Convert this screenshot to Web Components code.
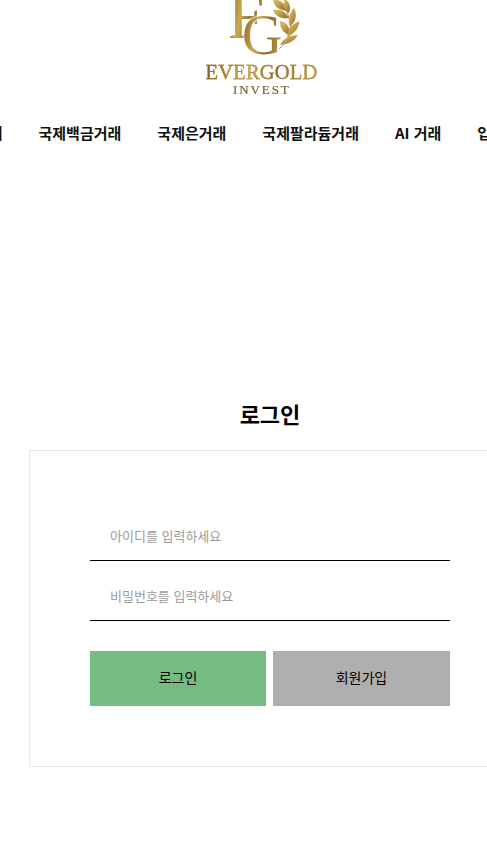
<!DOCTYPE html>
<html lang="ko">
<head>
<meta charset="utf-8">
<title>로그인</title>
<style>
html, body { margin: 0; background: #fff; overflow: hidden; height: 855px; }
body { font-family: "Noto Sans CJK KR", "Noto Sans", sans-serif; color: #000; }
</style>
</head>
<body>
<login-page>
  <site-logo slot="logo"></site-logo>
  <site-nav slot="nav">
    <a>국제금거래</a>
    <a>국제백금거래</a>
    <a>국제은거래</a>
    <a>국제팔라듐거래</a>
    <a>AI 거래</a>
    <a>입출금</a>
  </site-nav>
  <login-panel slot="panel">
    <text-field>아이디를 입력하세요</text-field>
    <text-field>비밀번호를 입력하세요</text-field>
    <action-button slot="actions" color="#76bb82">로그인</action-button>
    <action-button slot="actions" color="#afafaf">회원가입</action-button>
  </login-panel>
</login-page>
<script>
const logoTemplate = document.createElement('template')
logoTemplate.innerHTML = /* HTML */`
<style>
:host {
  display: block;
  position: relative;
  width: 140px;
  height: 100px;
  overflow: hidden;
  font-family: "Liberation Serif", serif;
}
span {
  position: absolute;
  white-space: nowrap;
  line-height: 1;
  color: transparent;
  -webkit-background-clip: text;
  background-clip: text;
  background-image: linear-gradient(100deg, #7a5c1c 0%, #cdaa52 38%, #8a6a26 62%, #c9a64e 100%);
  filter: blur(.3px);
}
.f { left: 38px; top: -16px; font-size: 65px; -webkit-text-stroke: .2px #8f6f2a; }
.g { left: 52px; top: 7px; font-size: 56px; filter: blur(.3px) drop-shadow(0 0 1px #fff) drop-shadow(0 0 1px #fff); }
.word { left: 15.5px; top: 62px; font-size: 20.5px; letter-spacing: .2px; -webkit-text-stroke: .3px #a5853a; }
.sub {
  left: 43px;
  top: 83px;
  font-size: 13px;
  letter-spacing: 1.9px;
  color: #7a6530;
  background: none;
  -webkit-text-stroke: .2px #7a6530;
}
svg { position: absolute; left: 0; top: 0; }
</style>
<span class="f">F</span>
<span class="g">G</span>
<svg width="140" height="100" viewBox="0 0 420 300">
  <defs>
    <linearGradient id="leaf" x1="0" y1="0" x2="1" y2="1">
      <stop offset="0" stop-color="#e0c67c"/>
      <stop offset=".5" stop-color="#bd9a46"/>
      <stop offset="1" stop-color="#8a6a28"/>
    </linearGradient>
  </defs>
  <path d="M268 146C294 122 308 92 298 58 294 40 284 22 272 8" fill="none" stroke="#a98a3c" stroke-width="3"/>
  <g fill="url(#leaf)">
    <path d="M249 -2C270 -2 286 10 288 32 266 30 250 18 249 -2Z"/>
    <path d="M284 -4C300 6 304 24 296 40 282 28 278 12 284 -4Z"/>
    <path d="M248 30C268 24 288 34 296 54 272 58 256 48 248 30Z"/>
    <path d="M312 24C322 44 318 66 300 80 292 60 298 40 312 24Z"/>
    <path d="M270 62C290 66 302 84 300 106 280 100 268 84 270 62Z"/>
    <path d="M328 64C326 86 312 102 292 110 292 90 306 72 328 64Z"/>
    <path d="M324 106C312 124 294 134 270 134 282 114 302 104 324 106Z"/>
  </g>
</svg>
<span class="word">EVERGOLD</span>
<span class="sub">INVEST</span>
`
class SiteLogo extends HTMLElement {
  constructor() {
    super()
    this.attachShadow({mode: 'open'}).appendChild(logoTemplate.content.cloneNode(true))
  }
}
customElements.define('site-logo', SiteLogo)

const navTemplate = document.createElement('template')
navTemplate.innerHTML = /* HTML */`
<style>
:host {
  display: flex;
  gap: 36px;
  margin-left: -66.5px;
  height: 64px;
  align-items: center;
  white-space: nowrap;
  font-size: 15px;
  font-weight: 700;
  color: #111;
}
</style>
<slot></slot>
`
class SiteNav extends HTMLElement {
  constructor() {
    super()
    this.attachShadow({mode: 'open'}).appendChild(navTemplate.content.cloneNode(true))
  }
}
customElements.define('site-nav', SiteNav)

const fieldTemplate = document.createElement('template')
fieldTemplate.innerHTML = /* HTML */`
<style>
:host {
  display: flex;
  align-items: center;
  box-sizing: border-box;
  height: 60px;
  padding: 10px 20px 0;
  border-bottom: 1px solid #000;
  font-size: 13px;
  color: #9c9c9c;
}
</style>
<slot></slot>
`
class TextField extends HTMLElement {
  constructor() {
    super()
    this.attachShadow({mode: 'open'}).appendChild(fieldTemplate.content.cloneNode(true))
  }
}
customElements.define('text-field', TextField)

const buttonTemplate = document.createElement('template')
buttonTemplate.innerHTML = /* HTML */`
<style>
:host {
  display: flex;
  align-items: center;
  justify-content: center;
  box-sizing: border-box;
  height: 55px;
  padding-bottom: 4px;
  font-size: 14px;
  cursor: pointer;
  background: var(--button-color);
}
</style>
<slot></slot>
`
class ActionButton extends HTMLElement {
  constructor() {
    super()
    this.attachShadow({mode: 'open'}).appendChild(buttonTemplate.content.cloneNode(true))
    this.style.setProperty('--button-color', this.getAttribute('color'))
  }
}
customElements.define('action-button', ActionButton)

const panelTemplate = document.createElement('template')
panelTemplate.innerHTML = /* HTML */`
<style>
:host {
  display: block;
  box-sizing: border-box;
  width: 482px;
  margin-left: 29px;
  padding: 50px 60px 60px;
  border: 1px solid #e9e9e9;
}
.actions {
  display: grid;
  grid-template-columns: 176px 177px;
  justify-content: space-between;
  margin-top: 30px;
}
</style>
<slot></slot>
<div class="actions"><slot name="actions"></slot></div>
`
class LoginPanel extends HTMLElement {
  constructor() {
    super()
    this.attachShadow({mode: 'open'}).appendChild(panelTemplate.content.cloneNode(true))
  }
}
customElements.define('login-panel', LoginPanel)

const pageTemplate = document.createElement('template')
pageTemplate.innerHTML = /* HTML */`
<style>
:host {
  display: block;
  width: 540px;
}
.logo { padding-left: 190px; }
h1 {
  margin: 0;
  padding-top: 233px;
  height: 53px;
  text-align: center;
  font-size: 22px;
  font-weight: 700;
  line-height: 32px;
}
</style>
<div class="logo"><slot name="logo"></slot></div>
<slot name="nav"></slot>
<h1>로그인</h1>
<slot name="panel"></slot>
`
class LoginPage extends HTMLElement {
  constructor() {
    super()
    this.attachShadow({mode: 'open'}).appendChild(pageTemplate.content.cloneNode(true))
  }
}
customElements.define('login-page', LoginPage)
</script>
</body>
</html>
